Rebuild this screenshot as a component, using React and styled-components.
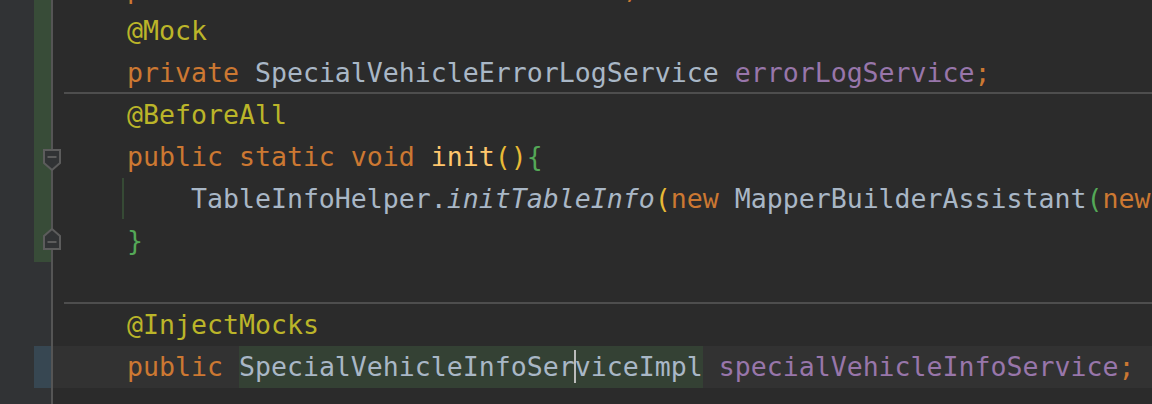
import React from 'react';
import styled, { createGlobalStyle, css } from 'styled-components';

const Global = createGlobalStyle`
  html, body { margin: 0; padding: 0; background: #2b2b2b; overflow: hidden; }
  #root { height: 404px; }
`;

const Editor = styled.div`
  width: 1152px;
  height: 404px;
  overflow: hidden;
  background: #2b2b2b;
  display: flex;
  flex-direction: column;
  font-family: "DejaVu Sans Mono", "Liberation Mono", monospace;
  font-size: 26.576px;
  line-height: 42px;
  color: #a9b7c6;
`;

const Row = styled.div`
  position: relative;
  flex: none;
  height: 42px;
  display: grid;
  grid-template-columns: 51px 2px 1fr;
  margin-top: ${(p) => p.$shift || 0}px;
`;

const Gutter = styled.div`
  background: #313335;
  display: flex;
  justify-content: flex-end;
`;

const ChangeMark = styled.div`
  width: 17px;
  background: ${(p) =>
    p.$kind === 'added' ? '#384c38' : p.$kind === 'modified' ? '#374752' : 'transparent'};
`;

const GutterRule = styled.div`
  background: #555555;
`;

const Code = styled.div`
  padding-left: 10px;
  white-space: pre;
  overflow: hidden;
  background-color: ${(p) => (p.$current ? '#323232' : 'transparent')};
  background-repeat: no-repeat;
  ${(p) =>
    p.$separator &&
    css`
      background-image: linear-gradient(#4e4e4e, #4e4e4e);
      background-position: 11px 100%;
      background-size: calc(100% - 11px) 2px;
    `}
  ${(p) =>
    p.$guide &&
    css`
      background-image: linear-gradient(#364a35, #364a35);
      background-position: 69px 0;
      background-size: 2px 41px;
    `}
`;

const FoldMarker = styled.svg`
  position: absolute;
  left: 43px;
  top: ${(p) => p.$top}px;
  width: 18px;
  height: 22px;
  z-index: 1;
`;

const Kw = styled.span` color: #cc7832; `;
const Ann = styled.span` color: #bbb529; `;
const Field = styled.span` color: #9876aa; `;
const Fn = styled.span` color: #ffc66d; `;
const Static = styled.span` font-style: italic; `;
const Brace = styled.span` color: ${(p) => p.$c}; `;

const UsageHighlight = styled.span`
  display: inline-block;
  vertical-align: top;
  line-height: 42px;
  height: 42px;
  background: #344134;
`;

const Caret = styled.span`
  display: inline-block;
  width: 2px;
  height: 33px;
  margin: 0 -1px;
  vertical-align: -7px;
  background: #bbbbbb;
`;

const GOLD = '#e8ba36';
const GREEN = '#54a857';

function FoldDown() {
  return (
    <FoldMarker $top={13} viewBox="0 0 18 22">
      <path d="M1 1 H17 V14 L9 21 L1 14 Z" fill="#313335" stroke="#5c5c5c" strokeWidth="2" strokeLinejoin="miter" />
      <path d="M4.5 8 H13.5" stroke="#5c5c5c" strokeWidth="2" />
    </FoldMarker>
  );
}

function FoldUp() {
  return (
    <FoldMarker $top={8} viewBox="0 0 18 22">
      <path d="M9 1 L17 8 V21 H1 V8 Z" fill="#313335" stroke="#5c5c5c" strokeWidth="2" strokeLinejoin="miter" />
      <path d="M4.5 14 H13.5" stroke="#5c5c5c" strokeWidth="2" />
    </FoldMarker>
  );
}

function Line({ change, shift, current, separator, guide, fold, children }) {
  return (
    <Row $shift={shift}>
      <Gutter>
        <ChangeMark $kind={change} />
      </Gutter>
      <GutterRule />
      <Code $current={current} $separator={separator} $guide={guide}>
        {children}
      </Code>
      {fold === 'down' && <FoldDown />}
      {fold === 'up' && <FoldUp />}
    </Row>
  );
}

export default function App() {
  return (
    <>
      <Global />
      <Editor>
        <Line change="added" shift={-32}>
          {'    '}<Kw>private</Kw> UserService <Field>userService</Field><Kw>;</Kw>
        </Line>
        <Line change="added">
          {'    '}<Ann>@Mock</Ann>
        </Line>
        <Line change="added" separator>
          {'    '}<Kw>private</Kw> SpecialVehicleErrorLogService <Field>errorLogService</Field><Kw>;</Kw>
        </Line>
        <Line change="added">
          {'    '}<Ann>@BeforeAll</Ann>
        </Line>
        <Line change="added" fold="down">
          {'    '}<Kw>public static void</Kw> <Fn>init</Fn><Brace $c={GOLD}>()</Brace><Brace $c={GREEN}>{'{'}</Brace>
        </Line>
        <Line change="added" guide>
          {'        '}TableInfoHelper.<Static>initTableInfo</Static><Brace $c={GOLD}>(</Brace><Kw>new</Kw> MapperBuilderAssistant<Brace $c={GREEN}>(</Brace><Kw>new</Kw> MybatisConfiguration(), <span>""</span>), SpecialVehicleInfo.class);
        </Line>
        <Line change="added" fold="up">
          {'    '}<Brace $c={GREEN}>{'}'}</Brace>
        </Line>
        <Line separator>{' '}</Line>
        <Line>
          {'    '}<Ann>@InjectMocks</Ann>
        </Line>
        <Line change="modified" current>
          {'    '}<Kw>public</Kw>{' '}
          <UsageHighlight>
            SpecialVehicleInfoSer<Caret />viceImpl
          </UsageHighlight>{' '}
          <Field>specialVehicleInfoService</Field><Kw>;</Kw>
        </Line>
        <Line>{' '}</Line>
      </Editor>
    </>
  );
}
